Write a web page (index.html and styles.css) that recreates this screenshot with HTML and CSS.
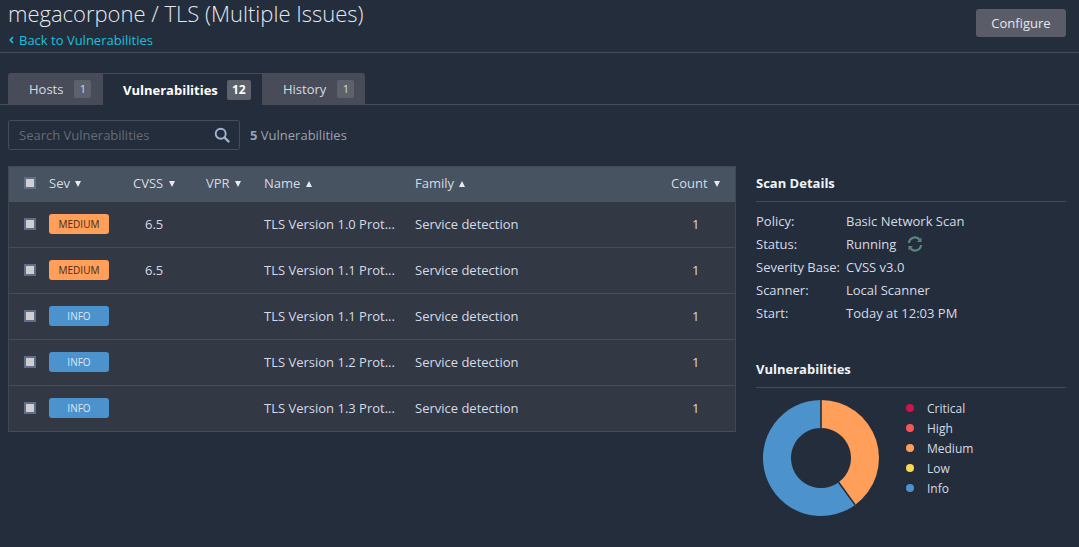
FILE: index.html
```html
<!DOCTYPE html>
<html lang="en">
<head>
  <meta charset="UTF-8">
  <title>megacorpone / TLS (Multiple Issues)</title>
  <link rel="stylesheet" href="styles.css">
</head>
<body>
  <header class="top">
    <div>
      <h1>megacorpone / TLS (Multiple Issues)</h1>
      <a class="back" href="#"><svg class="back-icon" width="5" height="8" viewBox="0 0 5 8"><path d="M4 1 1.3 4 4 7" fill="none" stroke="currentColor" stroke-width="1.7"/></svg>Back to Vulnerabilities</a>
    </div>
    <button class="configure">Configure</button>
  </header>

  <nav class="tabs">
    <a class="tab tab-hosts" href="#">Hosts <span class="num">1</span></a>
    <a class="tab tab-active" href="#">Vulnerabilities <span class="num">12</span></a>
    <a class="tab tab-history" href="#">History <span class="num">1</span></a>
  </nav>

  <div class="filter">
    <div class="search">
      <span>Search Vulnerabilities</span>
      <svg width="16" height="16" viewBox="0 0 16 16"><circle cx="6.7" cy="6.7" r="5" fill="none" stroke="#9db4d2" stroke-width="1.9"/><path d="M10.5 10.5 14.5 14.5" stroke="#9db4d2" stroke-width="2.4" stroke-linecap="round"/></svg>
    </div>
    <div class="found"><b>5</b> Vulnerabilities</div>
  </div>

  <div class="main">
    <table class="vulns">
      <thead>
        <tr>
          <th class="c-check"><span class="check"></span></th>
          <th class="c-sev">Sev <i class="down"></i></th>
          <th class="c-cvss">CVSS <i class="down"></i></th>
          <th class="c-vpr">VPR <i class="down"></i></th>
          <th class="c-name">Name <i class="up"></i></th>
          <th class="c-family">Family <i class="up"></i></th>
          <th class="c-count">Count <i class="down"></i></th>
        </tr>
      </thead>
      <tbody>
        <tr>
          <td><span class="check"></span></td>
          <td><span class="sev medium">MEDIUM</span></td>
          <td class="score">6.5</td>
          <td></td>
          <td>TLS Version 1.0 Prot...</td>
          <td>Service detection</td>
          <td class="count">1</td>
        </tr>
        <tr>
          <td><span class="check"></span></td>
          <td><span class="sev medium">MEDIUM</span></td>
          <td class="score">6.5</td>
          <td></td>
          <td>TLS Version 1.1 Prot...</td>
          <td>Service detection</td>
          <td class="count">1</td>
        </tr>
        <tr>
          <td><span class="check"></span></td>
          <td><span class="sev info">INFO</span></td>
          <td class="score"></td>
          <td></td>
          <td>TLS Version 1.1 Prot...</td>
          <td>Service detection</td>
          <td class="count">1</td>
        </tr>
        <tr>
          <td><span class="check"></span></td>
          <td><span class="sev info">INFO</span></td>
          <td class="score"></td>
          <td></td>
          <td>TLS Version 1.2 Prot...</td>
          <td>Service detection</td>
          <td class="count">1</td>
        </tr>
        <tr>
          <td><span class="check"></span></td>
          <td><span class="sev info">INFO</span></td>
          <td class="score"></td>
          <td></td>
          <td>TLS Version 1.3 Prot...</td>
          <td>Service detection</td>
          <td class="count">1</td>
        </tr>
      </tbody>
    </table>

    <aside class="side">
      <h2>Scan Details</h2>
      <dl class="details">
        <dt>Policy:</dt><dd>Basic Network Scan</dd>
        <dt>Status:</dt><dd>Running
          <svg class="spin" width="16" height="16" viewBox="0 0 16 16" fill="none" stroke="#5f8580" stroke-width="2.2"><path d="M2 7A6 6 0 0 1 12.6 3.6"/><path d="M14 9A6 6 0 0 1 3.4 12.4"/><path d="M14.5 1.5V6H10" fill="#5f8580" stroke="none"/><path d="M1.5 14.5V10H6" fill="#5f8580" stroke="none"/></svg>
        </dd>
        <dt>Severity Base:</dt><dd>CVSS v3.0</dd>
        <dt>Scanner:</dt><dd>Local Scanner</dd>
        <dt>Start:</dt><dd>Today at 12:03 PM</dd>
      </dl>

      <h2 class="second">Vulnerabilities</h2>
      <div class="chart">
        <svg class="donut" width="118" height="118" viewBox="0 0 118 118">
          <path d="M59 1A58 58 0 0 1 93.1 105.9L76.6 83.3A30 30 0 0 0 59 29Z" fill="#ff9f5a"/>
          <path d="M93.1 105.9A58 58 0 1 1 59 1V29A30 30 0 1 0 76.6 83.3Z" fill="#4c92cd"/>
          <path d="M59 1V29M93.1 105.9 76.6 83.3" stroke="#242d3c" stroke-width="1.6"/>
        </svg>
        <ul class="legend">
          <li><span class="dot critical"></span>Critical</li>
          <li><span class="dot high"></span>High</li>
          <li><span class="dot med"></span>Medium</li>
          <li><span class="dot low"></span>Low</li>
          <li><span class="dot inf"></span>Info</li>
        </ul>
      </div>
    </aside>
  </div>
</body>
</html>
```

FILE: styles.css
```css
* { box-sizing: border-box; }
html, body { height: 100%; }
body {
  margin: 0;
  overflow: hidden;
  background: #242d3c;
  color: #d5dbe5;
  font-family: "Open Sans", sans-serif;
  font-size: 13px;
}
a { color: inherit; text-decoration: none; }

.top {
  display: flex;
  justify-content: space-between;
  height: 53px;
  padding: 0 13px 0 8px;
  border-bottom: 1px solid #474c58;
}
h1 {
  margin: 0;
  font-size: 22px;
  font-weight: 300;
  line-height: 26px;
  color: #e3e8ef;
}
.back {
  display: block;
  margin-top: 5px;
  line-height: 18px;
  color: #1cc0dc;
}
.back-icon { margin: 0 5px 1px 1px; }
.configure {
  width: 90px;
  height: 28px;
  margin-top: 9px;
  border: 0;
  border-radius: 3px;
  background: #5a5d68;
  color: #e3e8ef;
  font: 13px "Open Sans", sans-serif;
}

.tabs {
  display: flex;
  height: 32px;
  margin: 20px 0 0;
  padding-left: 8px;
  border-bottom: 1px solid #474c58;
}
.tab {
  display: flex;
  align-items: center;
  height: 32px;
  background: #484c58;
  color: #d5dbe5;
}
.tab-hosts { width: 95px; padding-left: 21px; border-radius: 3px 0 0 0; gap: 11px; }
.tab-active {
  width: 159px;
  padding-left: 20px;
  gap: 9px;
  background: #242d3c;
  border-top: 1px solid #474c58;
  color: #fff;
  font-weight: 700;
}
.tab-history { width: 103px; padding-left: 21px; border-radius: 0 3px 0 0; gap: 11px; }
.num {
  min-width: 17px;
  padding: 0 5px;
  line-height: 18px;
  border-radius: 2px;
  background: #5d616c;
  font-size: 11px;
  font-weight: 400;
  text-align: center;
}
.tab-active .num { min-width: 24px; line-height: 20px; font-size: 12px; font-weight: 700; }

.filter {
  display: flex;
  align-items: center;
  gap: 10px;
  margin: 15px 0 16px 8px;
}
.search {
  display: flex;
  align-items: center;
  justify-content: space-between;
  width: 232px;
  height: 30px;
  padding: 0 9px 0 10px;
  border: 1px solid #474c58;
  border-radius: 3px;
  color: #656b77;
}
.found { color: #9aa1ad; }
.found b { font-weight: 700; }

.main { display: flex; gap: 20px; padding-left: 8px; }
.vulns {
  width: 728px;
  height: 266px;
  table-layout: fixed;
  border-collapse: separate;
  border-spacing: 0;
  background: #333845;
  border: 1px solid #41464f;
  border-bottom: 0;
}
.vulns th {
  height: 35px;
  padding: 0 0 4px;
  background: #475361;
  font-weight: 400;
  text-align: left;
  color: #d5dbe5;
}
.vulns td {
  height: 46px;
  padding: 0 0 2px;
  border-bottom: 1px solid #474c58;
}
.c-check { width: 40px; }
.c-sev { width: 84px; }
.c-cvss { width: 73px; }
.c-vpr { width: 58px; }
.c-name { width: 151px; }
.c-family { width: 256px; }
.vulns td:first-child, .vulns th:first-child { padding-left: 15px; }
.check {
  display: block;
  width: 12px;
  height: 12px;
  border: 2px solid #5f6e8a;
  background: #cfcfcf;
}
.down, .up {
  display: inline-block;
  width: 0;
  height: 0;
  margin-left: 2px;
  vertical-align: 1px;
  border-left: 3.5px solid transparent;
  border-right: 3.5px solid transparent;
}
.down { border-top: 6px solid #e8ecf1; }
.up { border-bottom: 6px solid #e8ecf1; }
.c-count .down { margin-left: 3px; }
.sev {
  display: block;
  width: 60px;
  line-height: 20px;
  border-radius: 3px;
  font-size: 10px;
  text-align: center;
}
.medium { background: #ff9f5a; color: #4a2a12; }
.info { background: #4c92cd; color: #dbe9f5; }
.vulns .score { padding-left: 12px; }
.vulns .count { padding-left: 21px; }

.side { width: 310px; margin-top: 6px; }
h2 {
  margin: 0;
  padding-bottom: 7px;
  border-bottom: 1px solid #474c58;
  font-size: 13px;
  font-weight: 700;
  line-height: 22px;
  color: #f0f3f7;
}
.second { margin-top: 34px; }
.details {
  display: grid;
  grid-template-columns: 90px 1fr;
  grid-auto-rows: 23px;
  align-items: center;
  margin: 7px 0 0;
}
.details dd { display: flex; align-items: center; gap: 11px; margin: 0; }
.chart { display: flex; align-items: flex-start; margin-top: 10px; padding-left: 6px; }
.donut { margin-top: 1px; }
.legend {
  margin: 0 0 0 26px;
  padding: 0;
  list-style: none;
  font-size: 12px;
}
.legend li {
  display: flex;
  align-items: center;
  height: 20px;
}
.dot {
  width: 8px;
  height: 8px;
  margin-right: 13px;
  border-radius: 50%;
}
.critical { background: #c9154a; }
.high { background: #f8555b; }
.med { background: #ff9f5a; }
.low { background: #fdd751; }
.inf { background: #4c92cd; }
```
